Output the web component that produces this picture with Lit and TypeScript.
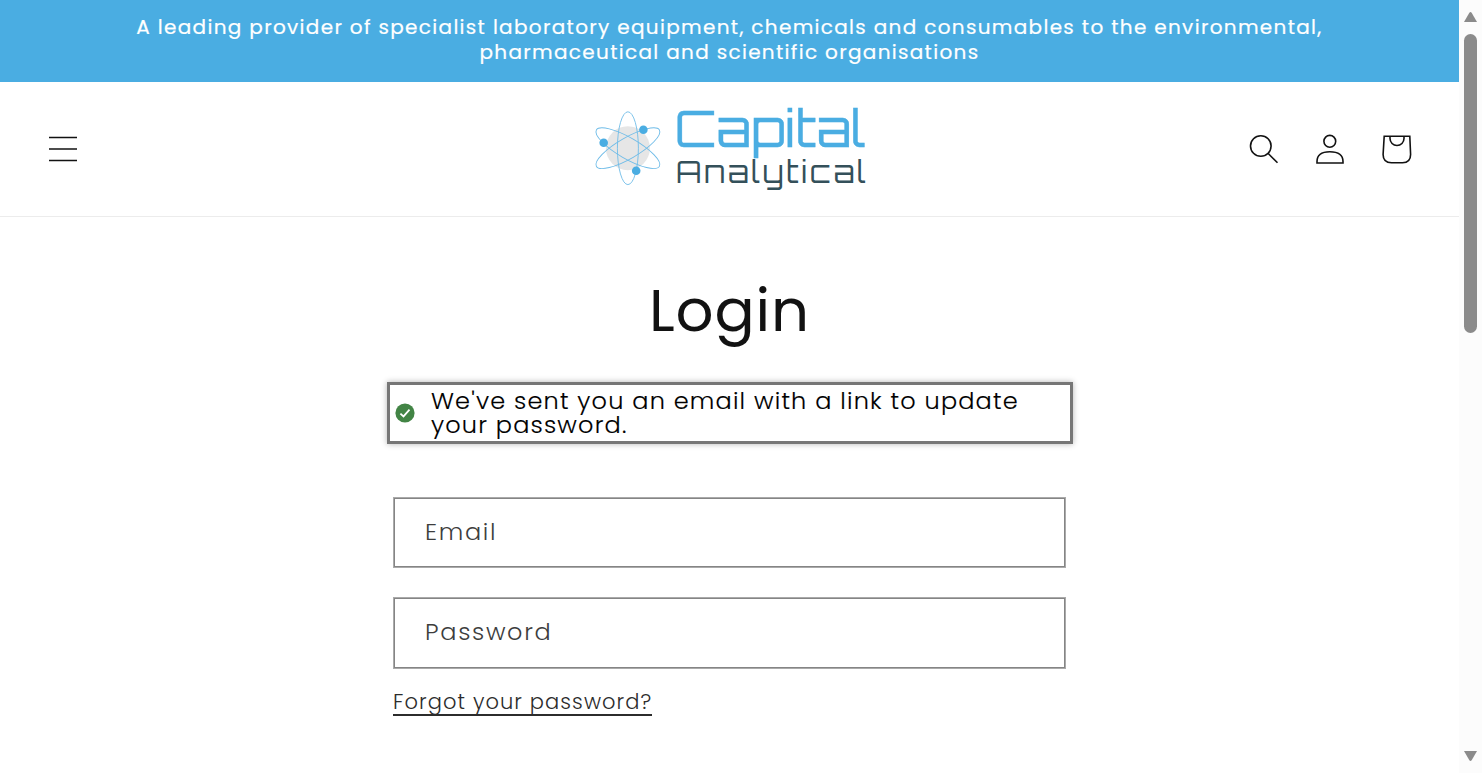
import { LitElement, html, css, svg } from "lit";
import { customElement } from "lit/decorators.js";

@customElement("app-root")
export class AppRoot extends LitElement {
  static styles = css`
    :host {
      display: flex;
      height: 773px;
      overflow: hidden;
      background: #fff;
      color: #121212;
      font-family: Poppins, Inter, "Liberation Sans", sans-serif;
      font-weight: 300;
    }
    * { box-sizing: border-box; }
    svg { display: block; }
    .page { width: 1459px; display: flex; flex-direction: column; }
    .announcement {
      height: 82px;
      padding-top: 15px;
      background: #4aade2;
      color: #fff;
      text-align: center;
      font-size: 20px;
      font-weight: 400;
      line-height: 25px;
      letter-spacing: 1.32px;
      -webkit-text-stroke: 0.2px #fff;
      white-space: nowrap;
    }
    .announcement span { display: block; }
    header {
      height: 135px;
      border-bottom: 1px solid #ececec;
      display: grid;
      grid-template-columns: 1fr 284px 1fr;
      align-items: center;
      padding: 0 29px 0 29px;
    }
    .menu { margin-left: 20px; }
    .logo { justify-self: center; overflow: visible; }
    .icons { display: flex; justify-self: end; margin-right: -1px; gap: 0; }
    main { width: 686px; margin: 0 auto; padding-top: 65px; }
    h1 {
      margin: 0;
      height: 100px;
      text-align: center;
      font-size: 59.5px;
      line-height: 57px;
      font-weight: 400;
      letter-spacing: 0.9px;
    }
    .notice {
      height: 62px;
      margin: 0;
      border: 3px solid #767676;
      box-shadow: 0 0 6px rgba(0, 0, 0, 0.3);
      display: flex;
      align-items: center;
      padding-left: 5px;
      gap: 16.5px;
      color: #000;
      font-size: 24px;
      line-height: 24px;
      letter-spacing: 1.17px;
      -webkit-text-stroke: 0.15px #000;
      white-space: nowrap;
    }
    .notice span { display: block; }
    form { padding: 53px 7px 0 6px; }
    .field {
      height: 71px;
      border: 1px solid #aaa;
      box-shadow: inset 0 0 0 1px #858585;
      padding: 0 31px 2px 31.6px;
      display: flex;
      align-items: center;
      font-size: 24px;
      letter-spacing: 1.65px;
      color: #3d3d3d;
      margin-bottom: 29px;
    }
    .password { height: 72px; padding-bottom: 3px; margin-bottom: 19px; }
    .forgot {
      display: inline-block;
      width: 259px;
      height: 28px;
      margin-left: 0.6px;
      border-bottom: 2px solid #2c2c2c;
      font-size: 21px;
      line-height: 27px;
      letter-spacing: 1.07px;
      color: #2c2c2c;
      white-space: nowrap;
    }
    .scrollbar {
      width: 23px;
      background: #fcfcfc;
      display: flex;
      flex-direction: column;
      align-items: center;
      padding: 12px 0 12px;
    }
    .thumb { width: 13px; height: 299px; border-radius: 7px; background: #8b8b8b; margin: 12px 0 auto; }
  `;

  private logo() {
    const orbit = (angle: number) => svg`
      <ellipse cx="47.5" cy="51" rx="10.5" ry="36.4" transform="rotate(${angle} 47.5 51)"/>`;
    return html`<svg class="logo" width="284" height="94" viewBox="0 0 284 94" role="img">
      <g transform="translate(-7.6 -4.8)">
        <circle cx="47.5" cy="51" r="22" fill="#e6e6e6"/>
        <g fill="none" stroke="#6fbce8" stroke-width=".9">${orbit(0)}${orbit(60)}${orbit(-60)}</g>
        <g fill="#4aade2">
          <circle cx="63" cy="32.5" r="4.3"/>
          <circle cx="23.3" cy="45.5" r="4.3"/>
          <circle cx="55.8" cy="73.6" r="4.3"/>
        </g>
      </g>
      <text x="87" y="45" font-family="Orbitron, Inter, sans-serif" font-size="50" font-weight="400"
        fill="#4aade2" stroke="#4aade2" stroke-width=".4" textLength="191" lengthAdjust="spacingAndGlyphs">Capital</text>
      <text x="88" y="81" font-family="Orbitron, Inter, sans-serif" font-size="30.5" font-weight="400"
        fill="#34505a" textLength="190" lengthAdjust="spacing">Analytical</text>
    </svg>`;
  }

  render() {
    return html`
      <div class="page">
        <div class="announcement">
          <span>A leading provider of specialist laboratory equipment, chemicals and consumables to the environmental,</span>
          <span>pharmaceutical and scientific organisations</span>
        </div>
        <header>
          <svg class="menu" width="28" height="28" viewBox="0 0 28 28" stroke="#121212" stroke-width="1.7">
            <path d="M0 2.5H28M0 14H28M0 25.5H28"/>
          </svg>
          ${this.logo()}
          <div class="icons">
            <svg width="66" height="66" viewBox="0 0 66 66" fill="none" stroke="#121212" stroke-width="1.6">
              <circle cx="29.8" cy="30" r="10.3"/><path d="M37 37.3L46.5 46.8"/>
            </svg>
            <svg width="66" height="66" viewBox="0 0 66 66" fill="none" stroke="#121212" stroke-width="1.6">
              <circle cx="32.8" cy="25.3" r="5.9"/>
              <path d="M20 47V45.5C20 39.5 24.2 35.7 32.8 35.7S46 39.5 46 45.5V47Z"/>
            </svg>
            <svg width="68" height="66" viewBox="0 0 68 66" fill="none" stroke="#121212" stroke-width="1.6">
              <path d="M21.2 20.3H46.8L47.6 38.5Q47.6 46.7 39.5 46.7H28.5Q20.1 46.7 20.1 38.5Z"/>
              <path d="M27 20.3V22.5A7 7 0 0 0 41 22.5V20.3"/>
            </svg>
          </div>
        </header>
        <main>
          <h1>Login</h1>
          <div class="notice">
            <svg width="20" height="20" viewBox="0 0 20 20">
              <circle cx="10" cy="10" r="9.6" fill="#428445"/>
              <path d="M5.4 10.6L8.5 13.4L14.5 6.7" fill="none" stroke="#fff" stroke-width="1.8"/>
            </svg>
            <div><span>We've sent you an email with a link to update</span><span>your password.</span></div>
          </div>
          <form>
            <div class="field">Email</div>
            <div class="field password">Password</div>
            <a class="forgot">Forgot your password?</a>
          </form>
        </main>
      </div>
      <div class="scrollbar">
        <svg width="15" height="10" viewBox="0 0 15 10"><path d="M1 10L6.2 1Q7.5-.8 8.8 1L14 10Z" fill="#8b8b8b"/></svg>
        <div class="thumb"></div>
        <svg width="15" height="10" viewBox="0 0 15 10"><path d="M1 0H14L8.8 9Q7.5 10.8 6.2 9Z" fill="#8b8b8b"/></svg>
      </div>`;
  }
}
